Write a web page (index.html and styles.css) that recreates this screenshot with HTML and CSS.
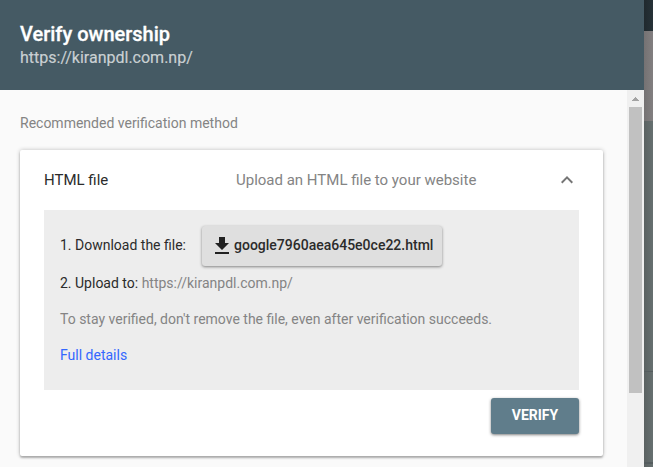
FILE: index.html
```html
<!DOCTYPE html>
<html lang="en">
<head>
<meta charset="utf-8">
<title>Verify ownership</title>
<link rel="stylesheet" href="styles.css">
</head>
<body>
<div class="page">
  <section class="dialog">
    <header class="dialog-header">
      <h1>Verify ownership</h1>
      <p class="site">https://kiranpdl.com.np/</p>
    </header>
    <div class="viewport">
      <main class="content">
        <h2>Recommended verification method</h2>
        <article class="card">
          <div class="card-head">
            <span class="method">HTML file</span>
            <span class="summary">Upload an HTML file to your website</span>
            <svg class="chevron" width="24" height="24" viewBox="0 0 24 24"><path d="M12 8l-6 6 1.41 1.41L12 10.83l4.59 4.58L18 14z"/></svg>
          </div>
          <div class="steps">
            <div class="step download">
              <span>1. Download the file:</span>
              <button class="file"><svg width="24" height="24" viewBox="0 0 24 24"><path d="M19 9h-4V3H9v6H5l7 7 7-7zM5 18v2h14v-2H5z"/></svg><span>google7960aea645e0ce22.html</span></button>
            </div>
            <div class="step">2. Upload to: <span class="muted">https://kiranpdl.com.np/</span></div>
            <p class="step note muted">To stay verified, don't remove the file, even after verification succeeds.</p>
            <a class="step link">Full details</a>
          </div>
          <div class="actions"><button class="verify">VERIFY</button></div>
        </article>
      </main>
      <div class="scrollbar">
        <svg width="17" height="17" viewBox="0 0 17 17" shape-rendering="crispEdges"><path d="M5 11h7v-1h-1V9h-1V8H9V7H8v1H7v1H6v1H5z"/></svg>
        <div class="thumb"></div>
      </div>
    </div>
  </section>
  <aside class="backdrop">
    <div class="bar"></div>
    <div class="band"></div>
    <div class="pane first"></div>
    <div class="pane second"></div>
    <div class="pane"></div>
  </aside>
</div>
</body>
</html>
```

FILE: styles.css
```css
* { box-sizing: border-box; }
body { margin: 0; font-family: Roboto, sans-serif; font-size: 14px; color: #2b2b2b; }
h1, h2, p { margin: 0; }
button { font-family: inherit; border: 0; border-radius: 3px; }
.page { display: flex; width: 653px; height: 467px; overflow: hidden; }
.dialog { width: 644px; display: flex; flex-direction: column; background: #fafafa; }
.dialog-header { height: 90px; padding: 22px 20px 0; background: #455a64; color: #fff; flex: none; }
h1 { font-size: 20px; line-height: 24px; font-weight: 500; -webkit-text-stroke: .3px #fff; }
.site { font-size: 16px; line-height: 24px; color: rgba(255, 255, 255, .7); -webkit-text-stroke: .2px rgba(255, 255, 255, .5); }
.viewport { flex: 1; min-height: 0; display: flex; }
.content { width: 627px; padding: 25px 24px 0 20px; }
h2 { font-size: 14px; line-height: 16px; font-weight: 400; color: #848484; margin-bottom: 19px; }
.card { width: 583px; height: 306px; padding: 0 24px; background: #fff; border-radius: 2px; box-shadow: 0 2px 2px rgba(0, 0, 0, .24), 0 0 4px rgba(0, 0, 0, .24); }
.card-head { height: 60px; display: flex; align-items: center; font-size: 15px; }
.method { width: 192px; }
.summary { color: #848484; flex: 1; }
.chevron { fill: #757575; }
.steps { height: 180px; padding: 16px 16px 0; background: #ededed; }
.step { display: block; height: 36px; line-height: 36px; white-space: nowrap; }
.download { display: flex; align-items: center; height: 39px; gap: 16px; }
.download > span { padding-bottom: 2px; }
.file { display: flex; align-items: center; width: 240px; height: 40px; padding: 0 8px; margin-top: 1px; background: #dfdfdf; color: #2b2b2b; font-size: 14px; font-weight: 500; box-shadow: 0 1px 3px rgba(0, 0, 0, .45); }
.file span { padding-bottom: 2px; }
.file svg { flex: none; fill: #212121; }
.muted { color: #848484; }
.link { color: #3367ff; }
.actions { display: flex; justify-content: flex-end; padding-top: 8px; }
.verify { width: 88px; height: 36px; padding: 0 0 2px; background: #607d8b; color: #fff; font-size: 14px; font-weight: 700; box-shadow: 0 1px 3px rgba(0, 0, 0, .5); }
.scrollbar { width: 17px; background: #f0f0f0; }
.scrollbar svg { display: block; fill: #a3a3a3; }
.thumb { width: 13px; height: 286px; margin-left: 2px; background: #c1c1c1; }
.backdrop { width: 9px; background: linear-gradient(90deg, #5b6262, #667070); }
.bar { height: 31px; background: linear-gradient(90deg, #20292e, #263238); }
.band { height: 90px; background: linear-gradient(90deg, #757273, #827f80); }
.pane { border-bottom: 1px solid #555d5f; }
.first { height: 251px; }
.second { height: 91px; }
```
